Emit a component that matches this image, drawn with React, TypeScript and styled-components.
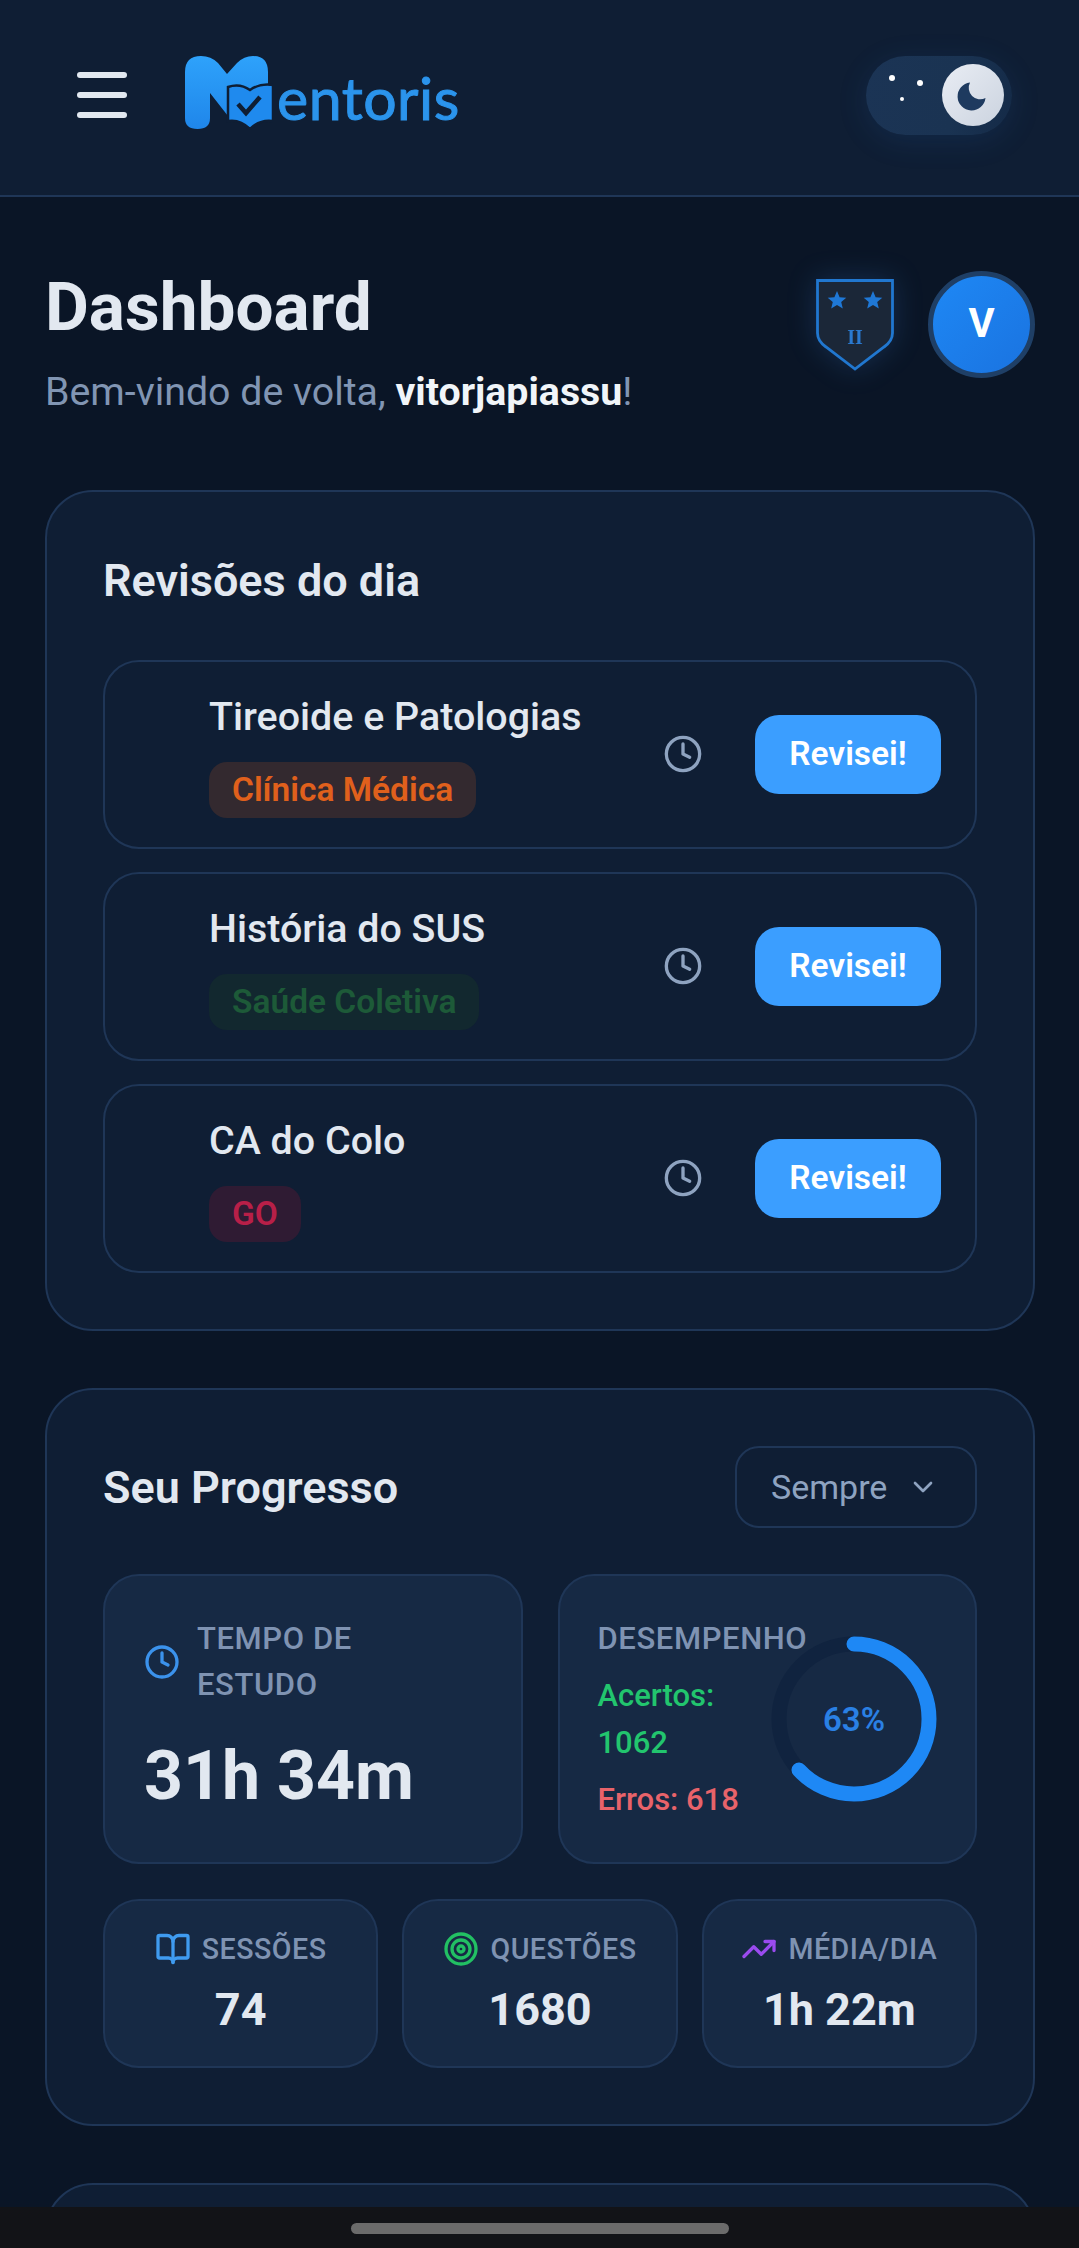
import React from "react";
import styled, { createGlobalStyle } from "styled-components";
import { BookOpen, ChevronDown, Clock, Target, TrendingUp } from "lucide-react";

const Global = createGlobalStyle`
  html, body { margin: 0; height: 100%; overflow: hidden; background: #0a1526; }
  #root { height: 100%; }
  * { box-sizing: border-box; }
  body { font-family: Roboto, "Liberation Sans", sans-serif; color: #e2e8f0; }
`;

const Screen = styled.div`
  height: 100vh;
  display: flex;
  flex-direction: column;
`;
const Scroll = styled.div`
  flex: 1;
  min-height: 0;
  overflow: hidden;
  background: #0a1526;
`;
const HomeBar = styled.div`
  height: 41px;
  flex: none;
  background: #121317;
  display: flex;
  justify-content: center;
  padding-top: 16px;
`;
const HomeHandle = styled.div`
  width: 378px;
  height: 11px;
  border-radius: 6px;
  background: #6b6b6b;
`;
const Header = styled.header`
  height: 197px;
  border-bottom: 2px solid #1f3657;
  background: #0f1e34;
  display: flex;
  align-items: center;
  padding: 0 67px 5px 77px;
`;
const Burger = styled.div`
  width: 50px;
  display: flex;
  flex-direction: column;
  gap: 14px;
`;
const BurgerLine = styled.span`
  display: block;
  height: 6px;
  border-radius: 3px;
  background: #e2e8f0;
`;
const Logo = styled.div`
  margin-left: 58px;
  display: flex;
  align-items: flex-end;
  margin-top: -4px;
`;
const LogoWord = styled.span`
  font-family: Lato, sans-serif;
  font-size: 59px;
  line-height: 74px;
  font-weight: 400;
  letter-spacing: 0.5px;
  color: #2b94ec;
  -webkit-text-stroke: 1px #2b94ec;
  margin-left: 4px;
  transform: translateY(5px);
`;
const Toggle = styled.div`
  margin-left: auto;
  width: 146px;
  height: 79px;
  border-radius: 40px;
  background: linear-gradient(100deg, #1b3455 0%, #1a3352 60%, #142a47 100%);
  box-shadow: 0 6px 30px rgba(40, 100, 180, 0.16);
  display: flex;
  align-items: center;
  justify-content: space-between;
  padding: 0 8px 0 20px;
`;
const Knob = styled.div`
  width: 62px;
  height: 62px;
  border-radius: 50%;
  background: linear-gradient(135deg, #e9edf4, #cbd3df);
  display: flex;
  align-items: center;
  justify-content: center;
  padding: 3px 4px 0 0;
`;
const Main = styled.main`
  padding: 71px 44px 0 45px;
  display: flex;
  flex-direction: column;
  gap: 57px;
`;
const Welcome = styled.section`
  display: flex;
  justify-content: space-between;
  align-items: flex-start;
  height: 151px;
  margin-bottom: 14px;
`;
const Title = styled.h1`
  margin: 0;
  font-size: 67.500px;
  line-height: 78px;
  font-weight: 700;
  color: #e2e8f0;
`;
const Subtitle = styled.p`
  margin: 19px 0 0;
  font-size: 39.300px;
  line-height: 54px;
  color: #8195b3;
  & b { color: #f1f5f9; font-weight: 700; }
`;
const Badges = styled.div`
  display: flex;
  align-items: center;
  gap: 34px;
  margin-top: 3px;
  padding-left: 1px;
`;
const ShieldWrap = styled.div`
  display: flex;
  filter: drop-shadow(0 0 14px rgba(60, 130, 220, 0.22));
`;
const Avatar = styled.div`
  width: 107px;
  height: 107px;
  border-radius: 50%;
  border: 5px solid #1f3f66;
  background: linear-gradient(135deg, #1e88f5, #1a73e0);
  color: #fff;
  font-size: 40px;
  font-weight: 700;
  padding-bottom: 2px;
  display: flex;
  align-items: center;
  justify-content: center;
`;
const Card = styled.section`
  border: 2px solid #1f3657;
  border-radius: 48px;
  background: #0f1e34;
  padding: 56px;
`;
const CardTitle = styled.h2`
  margin: 0;
  font-size: 45px;
  line-height: 64px;
  font-weight: 600;
  color: #e2e8f0;
  padding-top: 1px;
`;
const ReviewList = styled.div`
  margin-top: 47px;
  display: flex;
  flex-direction: column;
  gap: 23px;
`;
const ReviewRow = styled.div`
  height: 189px;
  border: 2px solid #1f3657;
  border-radius: 36px;
  display: flex;
  align-items: center;
  padding: 0 34px 0 104px;
`;
const ReviewInfo = styled.div`
  flex: 1;
  min-width: 0;
  display: flex;
  flex-direction: column;
  align-items: flex-start;
  gap: 20px;
`;
const ReviewName = styled.div`
  font-size: 39.400px;
  line-height: 50px;
  font-weight: 500;
  color: #e2e8f0;
`;
const Tag = styled.span<{ $fg: string; $bg: string }>`
  height: 56px;
  display: flex;
  align-items: center;
  padding: 0 23px;
  border-radius: 18px;
  font-size: 33.500px;
  font-weight: 600;
  color: ${(p) => p.$fg};
  background: ${(p) => p.$bg};
`;
const ClockSlot = styled.div`
  display: flex;
  color: #8ea3c0;
  margin-right: 52px;
  margin-top: -2px;
`;
const ReviseButton = styled.button`
  width: 186px;
  height: 79px;
  border: 0;
  border-radius: 24px;
  background: #3b9eff;
  color: #fff;
  font-family: inherit;
  font-size: 33.500px;
  font-weight: 600;
  padding: 0 0 2px;
`;
const ProgressHead = styled.div`
  display: flex;
  align-items: center;
  justify-content: space-between;
  height: 82px;
`;
const RangeSelect = styled.div`
  width: 242px;
  height: 82px;
  border: 2px solid #1f3657;
  border-radius: 24px;
  display: flex;
  align-items: center;
  justify-content: space-between;
  padding: 0 36px 0 34px;
  font-size: 34px;
  color: #8ea3c0;
`;
const StatsTop = styled.div`
  margin-top: 46px;
  display: grid;
  grid-template-columns: 1fr 1fr;
  gap: 35px;
`;
const StatCard = styled.div`
  height: 290px;
  border: 2px solid #1f3657;
  border-radius: 36px;
  background: #162944;
`;
const TimeCard = styled(StatCard)`
  padding: 40px 20px 0 39px;
`;
const TimeHead = styled.div`
  display: flex;
  align-items: center;
  gap: 17px;
  color: #3b92ec;
`;
const StatLabel = styled.div`
  font-size: 31px;
  line-height: 46px;
  font-weight: 500;
  letter-spacing: 0.6px;
  color: #7f93b2;
`;
const TimeValue = styled.div`
  margin-top: 26px;
  font-size: 68px;
  line-height: 84px;
  font-weight: 700;
  color: #e2e8f0;
`;
const ScoreCard = styled(StatCard)`
  display: flex;
  align-items: center;
  justify-content: space-between;
  padding: 0 38px 0 38px;
`;
const ScoreText = styled.div`
  width: 160px;
`;
const ScoreTitle = styled(StatLabel)`
  white-space: nowrap;
  position: relative;
`;
const ScoreLine = styled.div<{ $color: string }>`
  font-size: 31px;
  line-height: 47px;
  font-weight: 500;
  color: ${(p) => p.$color};
  margin-top: 10px;
`;
const Ring = styled.div`
  width: 166px;
  height: 166px;
  flex: none;
  display: grid;
  place-items: center;
  & > * { grid-area: 1 / 1; }
`;
const RingValue = styled.span`
  font-size: 33px;
  font-weight: 600;
  color: #2a80e4;
`;
const StatsBottom = styled.div`
  margin-top: 35px;
  display: grid;
  grid-template-columns: repeat(3, 1fr);
  gap: 24px;
`;
const MiniCard = styled.div`
  height: 169px;
  border: 2px solid #1f3657;
  border-radius: 36px;
  background: #162944;
  display: flex;
  flex-direction: column;
  align-items: center;
  padding-top: 30px;
`;
const MiniHead = styled.div<{ $color: string }>`
  display: flex;
  align-items: center;
  gap: 11px;
  height: 36px;
  color: ${(p) => p.$color};
`;
const MiniLabel = styled.span`
  font-size: 28.600px;
  font-weight: 500;
  letter-spacing: 0.5px;
  color: #7f93b2;
`;
const MiniValue = styled.div`
  margin-top: 13px;
  font-size: 45px;
  line-height: 60px;
  font-weight: 700;
  color: #e2e8f0;
`;
const NextCard = styled(Card)`
  height: 300px;
`;

const LogoMark = () => (
  <svg width="88" height="74" viewBox="0 0 88 74" aria-hidden="true">
    <defs>
      <linearGradient id="logoBlue" x1="0" y1="0" x2="0" y2="1">
        <stop offset="0" stopColor="#2ea2fb" />
        <stop offset="1" stopColor="#1f86ea" />
      </linearGradient>
    </defs>
    <path
      d="M0 16Q0 0 16 0Q26 0 33 7L42 18L52 7Q59 0 68 0Q83 0 83 16L83 40L43 60L25 37L25 62Q25 73 12.500 73Q0 73 0 62Z"
      fill="url(#logoBlue)"
    />
    <path
      d="M43 31Q55 27 65 34Q75 27 88 29L88 65Q75 63 65 73Q55 63 43 65Z"
      fill="#1f8aee"
      stroke="#0f1e34"
      strokeWidth="2.500"
    />
    <path d="M53 48L61 57L75 41" fill="none" stroke="#0f1e34" strokeWidth="4.500" />
  </svg>
);

const ToggleStars = () => (
  <svg width="44" height="50" viewBox="0 0 44 50" aria-hidden="true">
    <circle cx="6" cy="8" r="3" fill="#fff" />
    <circle cx="34" cy="13" r="3" fill="#fff" />
    <circle cx="16" cy="29" r="2" fill="#fff" />
  </svg>
);

const MoonMark = () => (
  <svg width="29" height="29" viewBox="0 0 29 29" aria-hidden="true">
    <path d="M13 0.500A14 14 0 1 0 28.500 16A11.500 11.500 0 0 1 13 0.500Z" fill="#1e3a5f" />
  </svg>
);

const Shield = () => (
  <svg width="78" height="92" viewBox="0 0 78 92" aria-hidden="true">
    <path
      d="M1.500 1.500H76.500V54Q76.500 62 68 68L39 90L10 68Q1.500 62 1.500 54Z"
      fill="#1b2738"
      stroke="#2177cf"
      strokeWidth="2.800"
    />
    <path
      d="M21 12l2.600 6.200 6.700.5-5.100 4.300 1.600 6.500L21 26l-5.800 3.500 1.600-6.500-5.100-4.300 6.700-.5zM57 12l2.600 6.200 6.700.5-5.100 4.300 1.600 6.500L57 26l-5.800 3.500 1.600-6.500-5.100-4.300 6.700-.5z"
      fill="#1f78d6"
    />
    <text x="39" y="65" textAnchor="middle" fontFamily="Liberation Serif, serif" fontWeight="700" fontSize="20" fill="#2a79cf">
      II
    </text>
  </svg>
);

const ScoreRing = () => {
  const r = 75;
  const c = 2 * Math.PI * r;
  return (
    <svg width="166" height="166" viewBox="0 0 166 166" aria-hidden="true">
      <circle cx="83" cy="83" r={r} fill="none" stroke="#10233f" strokeWidth="15" />
      <circle
        cx="83"
        cy="83"
        r={r}
        fill="none"
        stroke="#1e88f5"
        strokeWidth="15"
        strokeLinecap="round"
        strokeDasharray={`${c * 0.63} ${c}`}
        transform="rotate(-90 83 83)"
      />
    </svg>
  );
};

const reviews = [
  { name: "Tireoide e Patologias", tag: "Clínica Médica", fg: "#e0601c", bg: "#33292f" },
  { name: "História do SUS", tag: "Saúde Coletiva", fg: "#1d5a38", bg: "#12282f" },
  { name: "CA do Colo", tag: "GO", fg: "#b81f48", bg: "#2f1b33" },
];

const minis = [
  { Icon: BookOpen, color: "#3f9bf0", label: "SESSÕES", value: "74" },
  { Icon: Target, color: "#22c063", label: "QUESTÕES", value: "1680" },
  { Icon: TrendingUp, color: "#9a4bef", label: "MÉDIA/DIA", value: "1h 22m" },
];

export default function App() {
  return (
    <Screen>
      <Global />
      <Scroll>
        <Header>
          <Burger>
            <BurgerLine />
            <BurgerLine />
            <BurgerLine />
          </Burger>
          <Logo>
            <LogoMark />
            <LogoWord>entoris</LogoWord>
          </Logo>
          <Toggle>
            <ToggleStars />
            <Knob>
              <MoonMark />
            </Knob>
          </Toggle>
        </Header>
        <Main>
          <Welcome>
            <div>
              <Title>Dashboard</Title>
              <Subtitle>
                Bem-vindo de volta, <b>vitorjapiassu</b>!
              </Subtitle>
            </div>
            <Badges>
              <ShieldWrap>
                <Shield />
              </ShieldWrap>
              <Avatar>V</Avatar>
            </Badges>
          </Welcome>
          <Card>
            <CardTitle>Revisões do dia</CardTitle>
            <ReviewList>
              {reviews.map((r) => (
                <ReviewRow key={r.name}>
                  <ReviewInfo>
                    <ReviewName>{r.name}</ReviewName>
                    <Tag $fg={r.fg} $bg={r.bg}>
                      {r.tag}
                    </Tag>
                  </ReviewInfo>
                  <ClockSlot>
                    <Clock size={40} strokeWidth={2} />
                  </ClockSlot>
                  <ReviseButton>Revisei!</ReviseButton>
                </ReviewRow>
              ))}
            </ReviewList>
          </Card>
          <Card>
            <ProgressHead>
              <CardTitle>Seu Progresso</CardTitle>
              <RangeSelect>
                Sempre
                <ChevronDown size={32} strokeWidth={2} />
              </RangeSelect>
            </ProgressHead>
            <StatsTop>
              <TimeCard>
                <TimeHead>
                  <Clock size={36} strokeWidth={2.2} style={{ flex: "none" }} />
                  <StatLabel>
                    TEMPO DE
                    <br />
                    ESTUDO
                  </StatLabel>
                </TimeHead>
                <TimeValue>31h 34m</TimeValue>
              </TimeCard>
              <ScoreCard>
                <ScoreText>
                  <ScoreTitle>DESEMPENHO</ScoreTitle>
                  <ScoreLine $color="#22c56e">Acertos: 1062</ScoreLine>
                  <ScoreLine $color="#e8636a">Erros: 618</ScoreLine>
                </ScoreText>
                <Ring>
                  <ScoreRing />
                  <RingValue>63%</RingValue>
                </Ring>
              </ScoreCard>
            </StatsTop>
            <StatsBottom>
              {minis.map(({ Icon, color, label, value }) => (
                <MiniCard key={label}>
                  <MiniHead $color={color}>
                    <Icon size={36} strokeWidth={2.2} />
                    <MiniLabel>{label}</MiniLabel>
                  </MiniHead>
                  <MiniValue>{value}</MiniValue>
                </MiniCard>
              ))}
            </StatsBottom>
          </Card>
          <NextCard />
        </Main>
      </Scroll>
      <HomeBar>
        <HomeHandle />
      </HomeBar>
    </Screen>
  );
}
